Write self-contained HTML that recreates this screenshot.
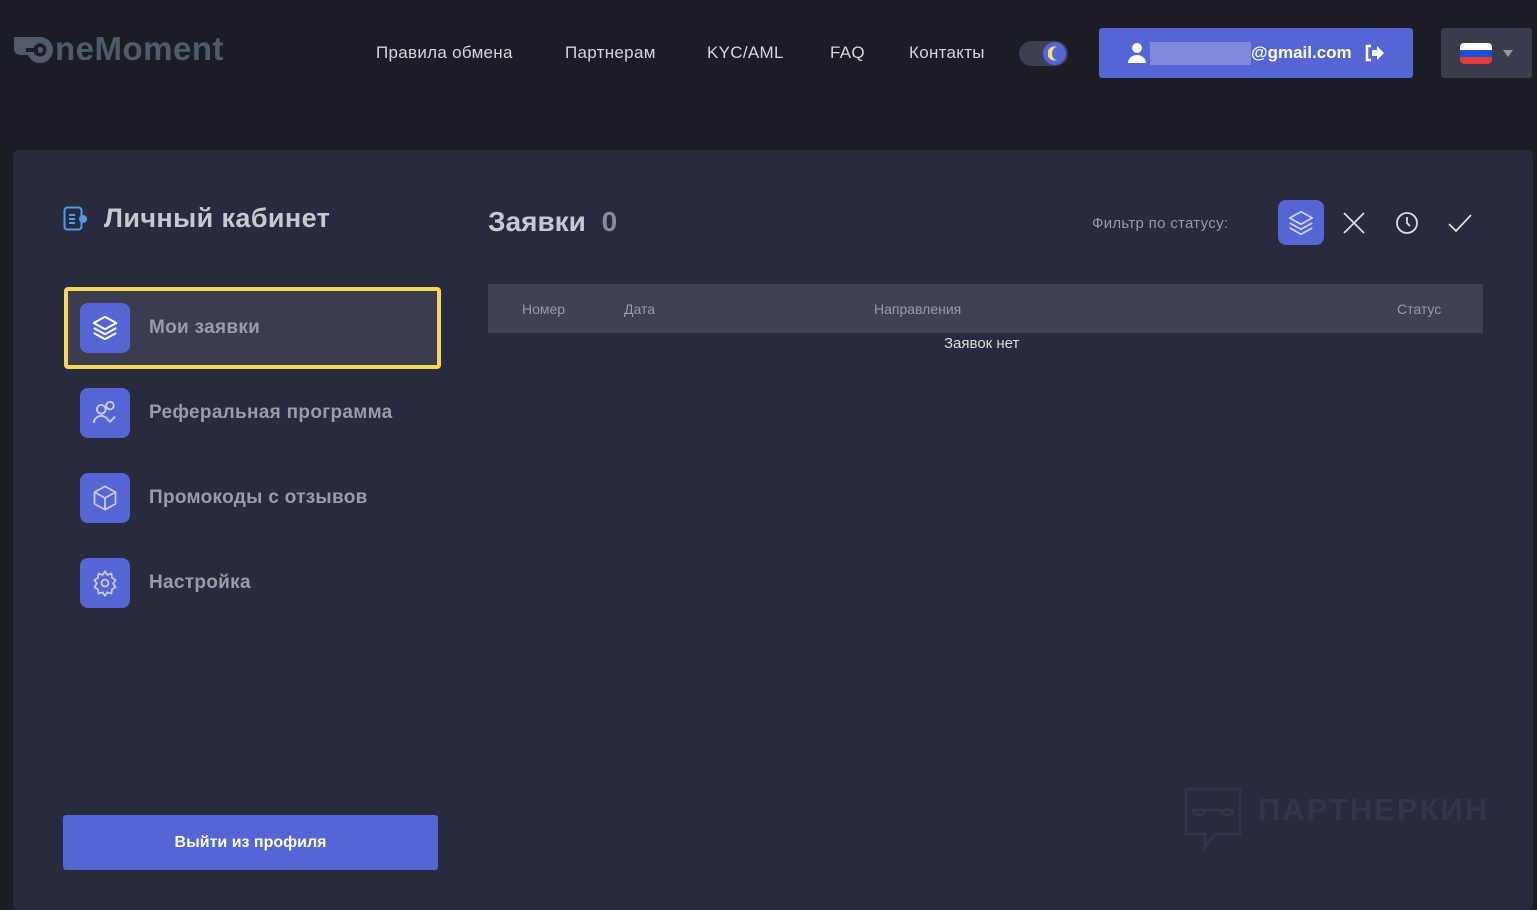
<!DOCTYPE html>
<html><head><meta charset="utf-8"><style>
*{box-sizing:border-box;margin:0;padding:0}
body{width:1537px;height:903px;background:#1c1c24;font-family:"Liberation Sans",sans-serif;color:#d8d8de;position:relative;overflow:hidden}
.abs{position:absolute}
.nav{top:43px;font-size:17px;color:#d5d5dc;letter-spacing:0.3px}
.panel{left:13px;top:150px;width:1520px;height:760px;background:#282a3d;border-radius:6px}
.ico{width:50px;height:50px;background:#5565d4;border-radius:8px;display:flex;align-items:center;justify-content:center}
.mi{font-size:19px;font-weight:bold;color:#9c9ca6;letter-spacing:0.3px}
</style></head><body>
<svg class="abs" style="left:14px;top:34px" width="40" height="30" viewBox="0 0 40 30"><path d="M0 3h26a13 13 0 0 1 0 26a13 13 0 0 1-12-8H6a6 6 0 0 1-6-6z" fill="#4f5b6a"/><circle cx="26" cy="16" r="6.5" fill="#1c1c24"/><circle cx="26" cy="16" r="3" fill="#4f5b6a"/><rect x="12" y="14" width="12" height="4" fill="#1c1c24"/></svg>
<div class="abs" style="left:55px;top:30px;font-size:33px;font-weight:bold;color:#4f5b6a;letter-spacing:0.5px">neMoment</div>
<div class="abs nav" style="left:376px">Правила обмена</div>
<div class="abs nav" style="left:565px">Партнерам</div>
<div class="abs nav" style="left:707px">KYC/AML</div>
<div class="abs nav" style="left:830px">FAQ</div>
<div class="abs nav" style="left:909px">Контакты</div>
<div class="abs" style="left:1019px;top:41px;width:49px;height:25px;border-radius:13px;background:#3d3f52"></div>
<div class="abs" style="left:1043px;top:42px;width:23px;height:23px;border-radius:50%;background:#5565d4"></div>
<svg class="abs" style="left:1048px;top:46px" width="14" height="15" viewBox="0 0 14 15"><path d="M9 1a7 7 0 1 0 0 13a5 6.5 0 0 1 0-13z" fill="#f3e27a"/></svg>
<div class="abs" style="left:1099px;top:28px;width:314px;height:50px;background:#5565d4;border-radius:3px"></div>
<svg class="abs" style="left:1128px;top:43px" width="18" height="20" viewBox="0 0 18 20"><circle cx="9" cy="5" r="5" fill="#fff"/><path d="M0 20a9 8 0 0 1 18 0z" fill="#fff"/></svg>
<div class="abs" style="left:1150px;top:42px;width:101px;height:23px;background:#7f8ad9"></div>
<div class="abs" style="left:1251px;top:43px;font-size:17px;font-weight:bold;color:#fff">@gmail.com</div>
<svg class="abs" style="left:1364px;top:44px" width="20" height="18" viewBox="0 0 20 18"><path d="M7 2H3v14h4" stroke="#fff" stroke-width="2.5" fill="none"/><path d="M8 6h5V2l7 7-7 7v-4H8z" fill="#fff"/></svg>
<div class="abs" style="left:1441px;top:28px;width:91px;height:50px;background:#3a3b4b;border-radius:3px"></div>
<div class="abs" style="left:1460px;top:43px;width:32px;height:21px;border-radius:4px;background:linear-gradient(#fff 0 33%,#1a4fd6 33% 66%,#e03a3a 66%)"></div>
<div class="abs" style="left:1503px;top:50px;border:5px solid transparent;border-top:7px solid #999"></div>

<div class="abs panel"></div>
<svg class="abs" style="left:63px;top:206px" width="26" height="26" viewBox="0 0 26 26"><rect x="1.5" y="1.5" width="17" height="22" rx="3" stroke="#4a9fe6" stroke-width="2" fill="none"/><path d="M6 9h6M6 13h6M6 17h6" stroke="#4a9fe6" stroke-width="2"/><circle cx="20" cy="13" r="4" fill="#4a9fe6"/></svg>
<div class="abs" style="left:104px;top:203px;font-size:27px;font-weight:bold;color:#c8c8d0;letter-spacing:0.4px">Личный кабинет</div>

<div class="abs" style="left:64px;top:287px;width:377px;height:82px;border:4px solid #f3d955;border-radius:4px;background:#3b3c4f"></div>
<div class="abs ico" style="left:80px;top:303px"><svg width="30" height="30" viewBox="0 0 24 24" fill="none" stroke="#fff" stroke-width="1.6" stroke-linejoin="round"><path d="M12 3l9 5-9 5-9-5z"/><path d="M3 12l9 5 9-5"/><path d="M3 16l9 5 9-5"/></svg></div>
<div class="abs mi" style="left:149px;top:317px">Мои заявки</div>
<div class="abs ico" style="left:80px;top:388px"><svg width="30" height="30" viewBox="0 0 24 24" fill="none" stroke="#ccd" stroke-width="1.5"><circle cx="9" cy="9" r="3.5"/><circle cx="16" cy="6" r="3"/><path d="M3 20a6 6 0 0 1 11-3"/><path d="M14 17l2 2 4-4"/></svg></div>
<div class="abs mi" style="left:149px;top:402px">Реферальная программа</div>
<div class="abs ico" style="left:80px;top:473px"><svg width="28" height="28" viewBox="0 0 24 24" fill="none" stroke="#ccd" stroke-width="1.5" stroke-linejoin="round"><path d="M12 2l9 5v10l-9 5-9-5V7z"/><path d="M3 7l9 5 9-5M12 12v10"/></svg></div>
<div class="abs mi" style="left:149px;top:487px">Промокоды с отзывов</div>
<div class="abs ico" style="left:80px;top:558px"><svg width="28" height="28" viewBox="0 0 24 24" fill="none" stroke="#ccd" stroke-width="1.5"><circle cx="12" cy="12" r="3"/><path d="M12 2l2 3 3.5-1 .5 3.5 3 2-2 3 2 3-3 2-.5 3.5-3.5-1-2 3-2-3-3.5 1-.5-3.5-3-2 2-3-2-3 3-2 .5-3.5 3.5 1z"/></svg></div>
<div class="abs mi" style="left:149px;top:572px">Настройка</div>

<div class="abs" style="left:63px;top:815px;width:375px;height:55px;background:#5565d4;border-radius:3px;color:#fff;font-weight:bold;font-size:16px;text-align:center;line-height:55px">Выйти из профиля</div>

<div class="abs" style="left:488px;top:206px;font-size:28px;font-weight:bold;color:#c8c8d0">Заявки <span style="color:#8a8a96;margin-left:8px">0</span></div>
<div class="abs" style="left:1092px;top:215px;font-size:15px;color:#9a9aa5;letter-spacing:0.3px">Фильтр по статусу:</div>
<div class="abs ico" style="left:1278px;top:200px;width:46px;height:45px"><svg width="30" height="30" viewBox="0 0 24 24" fill="none" stroke="#d0d4f4" stroke-width="1.4" stroke-linejoin="round"><path d="M12 3l9 5-9 5-9-5z"/><path d="M3 12l9 5 9-5"/><path d="M3 16l9 5 9-5"/></svg></div>
<svg class="abs" style="left:1342px;top:211px" width="24" height="24" viewBox="0 0 24 24" stroke="#ddd" stroke-width="1.8"><path d="M2 2l20 20M22 2L2 22"/></svg>
<svg class="abs" style="left:1395px;top:211px" width="24" height="24" viewBox="0 0 24 24" fill="none" stroke="#ddd" stroke-width="1.8"><circle cx="12" cy="12" r="10"/><path d="M12 6v6l3 3"/></svg>
<svg class="abs" style="left:1448px;top:212px" width="24" height="22" viewBox="0 0 24 22" fill="none" stroke="#ddd" stroke-width="1.8"><path d="M1 12l7 7L23 3"/></svg>

<div class="abs" style="left:488px;top:284px;width:995px;height:49px;background:#3f4153"></div>
<div class="abs" style="left:522px;top:301px;font-size:14px;color:#9a9aa6">Номер</div>
<div class="abs" style="left:624px;top:301px;font-size:14px;color:#9a9aa6">Дата</div>
<div class="abs" style="left:874px;top:301px;font-size:14px;color:#9a9aa6">Направления</div>
<div class="abs" style="left:1397px;top:301px;font-size:14px;color:#9a9aa6">Статус</div>
<div class="abs" style="left:944px;top:335px;font-size:15px;color:#ddd">Заявок нет</div>

<svg class="abs" style="left:1183px;top:786px" width="60" height="66" viewBox="0 0 60 66" fill="none" stroke="#33364a" stroke-width="2.5"><path d="M3 3h54v45H32l-10 14V48H3z"/><path d="M9 24h42"/><path d="M10 24a6 5 0 0 0 12 0M38 24a6 5 0 0 0 12 0"/></svg>
<div class="abs" style="left:1258px;top:792px;font-size:31px;font-weight:bold;color:#33364a;letter-spacing:2px">ПАРТНЕРКИН</div>
</body></html>
